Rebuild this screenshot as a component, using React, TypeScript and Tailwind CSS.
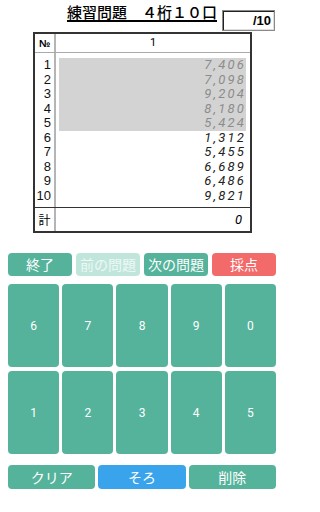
import React from 'react';

const rows = ['7,406', '7,098', '9,204', '8,180', '5,424', '1,312', '5,455', '6,689', '6,486', '9,821'];

const jp = { fontFamily: '"Noto Sans CJK JP", "Noto Sans", sans-serif' };

function Key({ label }: { label: string }) {
  return (
    <button className="flex-1 h-[83px] rounded-[4px] bg-[#55b39b] text-white text-[12px] font-['Roboto',sans-serif] flex items-center justify-center">
      {label}
    </button>
  );
}

export default function App() {
  return (
    <div className="w-[284px] h-[512px] bg-white overflow-hidden">
      {/* Title */}
      <div className="relative h-[32px]">
        <div className="pt-[2px] text-center text-[15px] leading-[19px] font-medium text-black underline decoration-[1.5px] underline-offset-[2px]" style={jp}>
          練習問題　４桁１０口
        </div>
        <div className="absolute left-[222px] top-[10px] w-[53px] h-[21px] border border-[#8a8a8a] shadow-[inset_1px_1px_0_#222,inset_-1px_-1px_0_#ddd] flex items-center justify-end pr-[3px] text-[13px] font-bold font-['Liberation_Sans',Arial,sans-serif]">
          /10
        </div>
      </div>

      {/* Table */}
      <div className="ml-[33px] w-[219px] border-2 border-[#333] font-['Liberation_Sans',Arial,sans-serif]">
        <div className="flex h-[19px] border-b border-[#aaa]">
          <div className="w-[21px] border-r-2 border-[#b5b5b5] text-[10px] flex items-center justify-center font-bold">№</div>
          <div className="flex-1 flex items-center justify-center text-[11px] font-['Roboto',sans-serif]">1</div>
        </div>
        <div className="flex">
          <div className="w-[21px] border-r-2 border-[#b5b5b5] pt-[5px] pb-[4px]">
            {rows.map((_, i) => (
              <div key={i} className="h-[14.5px] leading-[14.5px] text-right pr-[3px] text-[13px] text-[#111]">
                {i + 1}
              </div>
            ))}
          </div>
          <div className="flex-1 pt-[5px] pb-[4px] pl-[3px] pr-[4px]">
            <div className="bg-[#d3d3d3]">
              {rows.slice(0, 5).map((r) => (
                <div key={r} className="h-[14.5px] leading-[14.5px] text-right italic text-[13px] tracking-[2.2px] text-[#8c8c8c] font-['Roboto',sans-serif]">
                  {r}
                </div>
              ))}
            </div>
            {rows.slice(5).map((r) => (
              <div key={r} className="h-[14.5px] leading-[14.5px] text-right italic text-[13px] tracking-[2.2px] text-[#222] font-['Roboto',sans-serif]">
                {r}
              </div>
            ))}
          </div>
        </div>
        <div className="flex h-[24px] border-t border-[#333]">
          <div className="w-[21px] border-r-2 border-[#b5b5b5] flex items-center justify-center text-[12px]" style={jp}>計</div>
          <div className="flex-1 flex items-center justify-end pr-[8px] italic text-[13px] font-['Roboto',sans-serif]">0</div>
        </div>
      </div>

      {/* Controls */}
      <div className="px-[8px] pt-[20px]" style={jp}>
        <div className="flex gap-[4px] h-[23px] text-[14px] text-white">
          <button className="flex-1 rounded-[4px] bg-[#55b39b] flex items-center justify-center">終了</button>
          <button className="flex-1 rounded-[4px] bg-[#c0e6dc] text-[#edf8f5] flex items-center justify-center">前の問題</button>
          <button className="flex-1 rounded-[4px] bg-[#55b39b] flex items-center justify-center">次の問題</button>
          <button className="flex-1 rounded-[4px] bg-[#f36a6a] flex items-center justify-center">採点</button>
        </div>
        <div className="flex gap-[3px] mt-[8px]">
          {['6', '7', '8', '9', '0'].map((k) => <Key key={k} label={k} />)}
        </div>
        <div className="flex gap-[3px] mt-[4px]">
          {['1', '2', '3', '4', '5'].map((k) => <Key key={k} label={k} />)}
        </div>
        <div className="flex gap-[3px] mt-[11px] h-[24px] text-[14px] text-white">
          <button className="flex-1 rounded-[4px] bg-[#55b39b] flex items-center justify-center">クリア</button>
          <button className="flex-1 rounded-[4px] bg-[#39a4ec] flex items-center justify-center">そろ</button>
          <button className="flex-1 rounded-[4px] bg-[#55b39b] flex items-center justify-center">削除</button>
        </div>
      </div>
    </div>
  );
}
